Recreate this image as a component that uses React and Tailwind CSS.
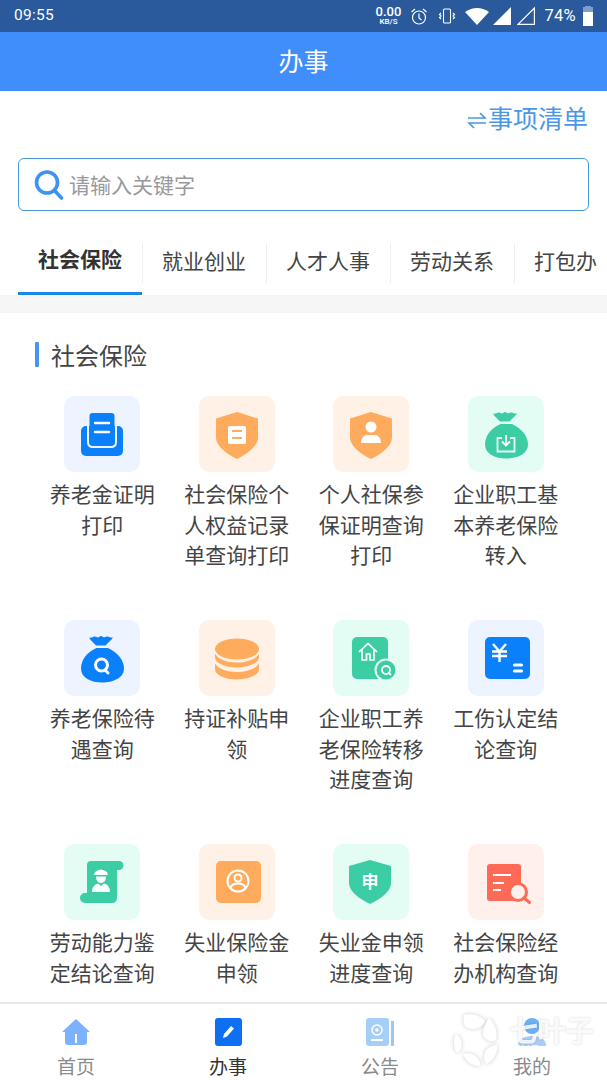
import React from "react";

const FONT = "font-['Roboto','Noto_Sans_CJK_SC',sans-serif]";
const B = "#0a80fb", O = "#ffab5e", G = "#3dcda5", R = "#ff6a56";
const BG = { b: "bg-[#edf4ff]", o: "bg-[#fff1e5]", g: "bg-[#e3fdf5]", r: "bg-[#fff0ec]" };

const Crown = ({ c }) => (
  <path fill={c} d="M25 17.500c3 1 4-1.500 6-1 2 .3 2.500 1.500 3.700.7 1.500-1.200 2.700-1.500 4-.5 1.500 1.300 2.300.3 4-.2 2-.5 3 1.500 6.300 1-1.500 2.800-5.300 5.500-7.500 8h-9.500c-2.500-2.700-5.500-5-7-8z" />
);
const Bag = ({ c }) => (
  <path fill={c} d="M32.500 28C23 32 17 40 17 48.500c0 9.500 10 14 21 14s22-4.500 22-14C60 40 53 32 44 28z" />
);
const Shield = ({ c }) => (
  <path fill={c} d="M38 16l21 6.500v19c0 8.500-10.500 16.500-21 21.500-10.500-5-21-13-21-21.500v-19z" />
);

const icons = {
  tray: (
    <>
      <rect x="17" y="30" width="42" height="30" rx="5" fill={B} />
      <path d="M24 30v16q0 5 5 5h18q5 0 5-5V30" fill="none" stroke="#edf4ff" strokeWidth="2" />
      <rect x="25.500" y="17" width="25" height="32" rx="3" fill={B} />
      <path d="M31 27h14M31 36h14" stroke="#fff" strokeWidth="2.500" strokeLinecap="round" />
    </>
  ),
  shieldDoc: (
    <>
      <Shield c={O} />
      <rect x="29" y="30" width="18" height="18" rx="2" fill="#fff" />
      <path d="M33 35h10M33 42h10" stroke={O} strokeWidth="2" />
    </>
  ),
  shieldUser: (
    <>
      <Shield c={O} />
      <circle cx="38" cy="31" r="5.500" fill="#fff" />
      <path d="M28 47c0-5 3-8 6-8h8c3 0 6 3 6 8z" fill="#fff" />
    </>
  ),
  bagIn: (
    <>
      <Crown c={G} />
      <Bag c={G} />
      <path d="M34 42h-4.500v13.500h17V42H42" fill="none" stroke="#e8fbf5" strokeWidth="1.800" />
      <path d="M38 39v10M34 45.500l4 4 4-4" fill="none" stroke="#fff" strokeWidth="1.800" />
    </>
  ),
  bagQ: (
    <>
      <Crown c={B} />
      <Bag c={B} />
      <circle cx="37.500" cy="45" r="6" fill="none" stroke="#fff" strokeWidth="3" />
      <path d="M41 50l3 3" stroke="#fff" strokeWidth="3" strokeLinecap="round" />
    </>
  ),
  coins: (
    <>
      <ellipse cx="38" cy="29" rx="22" ry="10.500" fill={O} />
      <path d="M16 34v3c0 6 10 10.500 22 10.500S60 43 60 37v-3c-3 5-12 8.500-22 8.500S19 39 16 34z" fill={O} />
      <path d="M16 43.500V49c0 6 10 10.500 22 10.500S60 55 60 49v-5.500c-3 5-12 8.500-22 8.500s-19-3.500-22-8.500z" fill={O} />
    </>
  ),
  house: (
    <>
      <rect x="19" y="17" width="36" height="42" rx="5" fill={G} />
      <path d="M26 32l9-8.500 9 8.500M29 29.500V40h4.500v-6h3.500v6h4V29.500" fill="none" stroke="#fff" strokeWidth="1.700" />
      <circle cx="53" cy="50" r="10.500" fill={G} stroke="#e3fdf5" strokeWidth="2" />
      <circle cx="53" cy="50" r="4" fill="none" stroke="#fff" strokeWidth="1.800" />
      <path d="M56 53l2 2" stroke="#fff" strokeWidth="1.800" />
    </>
  ),
  yen: (
    <>
      <rect x="17" y="17" width="45" height="42" rx="5" fill={B} />
      <path d="M25 24l6.500 7.500L38 24M24 31.500h15M24 36h15M31.500 31.500V42" fill="none" stroke="#fff" strokeWidth="2.400" />
      <path d="M46.500 45h7M46.500 51h7" stroke="#fff" strokeWidth="3.200" strokeLinecap="round" />
    </>
  ),
  scroll: (
    <>
      <path d="M27 17h28a4 4 0 0 1 0 9h-2v27q0 6-5 6H21a5 5 0 0 1 0-10h2V21q0-4 4-4z" fill={G} />
      <path d="M31 28q6-5 12 0l1 3H30zM32 32.500h10q0 6.500-5 6.500t-5-6.500z" fill="#fff" />
      <path d="M28 48q0-7 6-8.500l3 2.500 3-2.500q6 1.500 6 8.500z" fill="#fff" />
    </>
  ),
  card: (
    <>
      <rect x="17" y="17" width="45" height="42" rx="5" fill={O} />
      <circle cx="39" cy="37" r="10.500" fill="none" stroke="#fff" strokeWidth="2" />
      <circle cx="39" cy="34" r="3.500" fill="none" stroke="#fff" strokeWidth="2" />
      <path d="M31.500 44c1-3.500 4-4.500 7.500-4.500s6.500 1 7.500 4.500" fill="none" stroke="#fff" strokeWidth="2" />
    </>
  ),
  shieldShen: (
    <>
      <path d="M37 16l21 6v17c0 8.500-10.500 16-21 21-10.500-5-21-12.500-21-21V22z" fill={G} />
      <text x="37" y="44" textAnchor="middle" fontSize="17" fontWeight="700" fill="#fff" fontFamily="'Noto Sans CJK SC',sans-serif">申</text>
    </>
  ),
  listQ: (
    <>
      <rect x="19" y="20" width="34" height="37" rx="3" fill={R} />
      <path d="M25 31h18M25 39h11M25 46h8" stroke="#fff" strokeWidth="2" />
      <circle cx="50" cy="48" r="8.500" fill="#fff0ec" stroke={R} strokeWidth="3" />
      <path d="M56 54l5.500 4.500" stroke={R} strokeWidth="3" strokeLinecap="round" />
    </>
  ),
};

const items = [
  ["tray", "b", "养老金证明打印"],
  ["shieldDoc", "o", "社会保险个人权益记录单查询打印"],
  ["shieldUser", "o", "个人社保参保证明查询打印"],
  ["bagIn", "g", "企业职工基本养老保险转入"],
  ["bagQ", "b", "养老保险待遇查询"],
  ["coins", "o", "持证补贴申领"],
  ["house", "g", "企业职工养老保险转移进度查询"],
  ["yen", "b", "工伤认定结论查询"],
  ["scroll", "g", "劳动能力鉴定结论查询"],
  ["card", "o", "失业保险金申领"],
  ["shieldShen", "g", "失业金申领进度查询"],
  ["listQ", "r", "社会保险经办机构查询"],
];

const tabs = ["社会保险", "就业创业", "人才人事", "劳动关系", "打包办"];

function StatusIcons() {
  return (
    <div className="flex items-center">
      <div className="flex flex-col items-center text-white w-[24px] mr-[10px] mt-[-1px]">
        <span className="text-[13px] leading-[12px] font-medium">0.00</span>
        <span className="text-[8px] leading-[8px] font-medium">KB/S</span>
      </div>
      <svg width="18" height="19" viewBox="0 0 18 19" fill="none" stroke="#fff" strokeWidth="1.200" className="mr-[10px]">
        <circle cx="9" cy="10.500" r="6.500" />
        <path d="M9 6.500v4.500l2.500 2M1.500 5L5 2M16.500 5L13 2" />
      </svg>
      <svg width="18" height="18" viewBox="0 0 18 18" fill="none" stroke="#fff" strokeWidth="1.100" className="mr-[9px]">
        <rect x="5.500" y="2" width="7" height="14" rx="1" />
        <path d="M3 6L1.500 7.500 3 9 1.500 10.500 3 12M15 6l1.500 1.500L15 9l1.500 1.500L15 12" />
      </svg>
      <svg width="24" height="18" viewBox="0 0 24 18" className="mr-[4px]">
        <path d="M0 5Q12-3 24 5L12 18z" fill="#fff" />
      </svg>
      <svg width="18" height="18" viewBox="0 0 18 18" className="mr-[6px]">
        <path d="M0 18L18 0v18z" fill="#fff" />
      </svg>
      <svg width="18" height="18" viewBox="0 0 18 18" fill="none" stroke="#fff" strokeWidth="1.200" className="mr-[9px]">
        <path d="M1 17.400L17.400 1v16.400z" />
      </svg>
      <span className="text-[16.500px] text-white tracking-[0.3px] mr-[7px]">74%</span>
      <div className="relative w-[10px] h-[19px] bg-white">
        <div className="absolute top-[-1px] left-[2px] w-[6px] h-[6px] bg-[#7d9dc9]" />
        <div className="absolute top-0 left-0 w-full h-[5px] bg-[#7d9dc9]" />
      </div>
    </div>
  );
}

function Item({ icon, tone, label }) {
  return (
    <div className="h-[224px] flex flex-col items-center px-3">
      <div className={`w-[76px] h-[76px] rounded-[10px] ${BG[tone]} shrink-0`}>
        <svg width="76" height="76" viewBox="0 0 76 76">{icons[icon]}</svg>
      </div>
      <div className="mt-[8px] text-[21px] leading-[30.500px] text-center text-[#444] w-full">{label}</div>
    </div>
  );
}

function Nav({ label, active, children }) {
  return (
    <div className="flex flex-col items-center">
      <div className="h-[28px] mt-[14px] flex items-center justify-center">{children}</div>
      <span className={`mt-[8px] text-[19px] leading-[28px] ${active ? "text-[#333]" : "text-[#8a8a8a]"}`}>{label}</span>
    </div>
  );
}

export default function App() {
  return (
    <div className={`relative w-[607px] h-[1080px] overflow-hidden bg-white flex flex-col ${FONT}`}>
      <div className="h-[32px] shrink-0 bg-[#2a5a9c] flex items-center justify-between pl-[14px] pr-[14px]">
        <span className="text-[15.500px] text-white tracking-[0.3px]">09:55</span>
        <StatusIcons />
      </div>
      <div className="h-[59px] shrink-0 bg-[#3f8efc] flex items-center justify-center text-white text-[25px] pt-[3px]">办事</div>

      <div className="flex-1 min-h-0 overflow-hidden">
        <div className="flex justify-end items-center h-[56px] pr-[19px] text-[#4a96e8] text-[25px] leading-none">
          <svg width="20" height="20" viewBox="0 0 20 20" fill="none" stroke="currentColor" strokeWidth="1.600" className="mr-[1px] mt-[2px]">
            <path d="M1 8h17L13 3M19 13H2l5 5" />
          </svg>
          <span>事项清单</span>
        </div>
        <div className="mx-[18px] mt-[11px] h-[53px] rounded-[6px] border-[1.500px] border-[#4b9ad8] flex items-center pl-[15px]">
          <svg width="30" height="32" viewBox="0 0 30 32" fill="none" stroke="#3f92f2" strokeWidth="3.600" className="mr-[5px]">
            <circle cx="13" cy="13.500" r="10.500" />
            <path d="M21 22l6.500 7" strokeLinecap="round" />
          </svg>
          <span className="text-[#999] text-[21px] pt-[4px]">请输入关键字</span>
        </div>
        <div className="mt-[21px] flex pl-[18px] overflow-hidden h-[66px] whitespace-nowrap">
          {tabs.map((t, i) => (
            <div
              key={t}
              className={`relative shrink-0 w-[124px] h-[63px] flex items-center justify-center text-[21px] pb-[2px] ${
                i === 0 ? "font-bold text-[#333] border-b-[3px] border-[#1a86e8]" : "text-[#444]"
              }`}
            >
              <span className={i === 4 ? "absolute left-[20px]" : ""}>{t}</span>
              {i < 4 && <span className="absolute right-[-1px] top-[11px] h-[40px] w-px bg-[#eeeeee]" />}
            </div>
          ))}
        </div>
        <div className="h-[18px] bg-[#f6f6f6] -mt-[3px]" />
        <div className="flex items-center mt-[29px] pl-[35px] h-[25px]">
          <span className="w-[4px] h-[25px] rounded-[1px] bg-[#4a93f0] mr-[12px]" />
          <span className="text-[24px] text-[#444] pt-[4px]">社会保险</span>
        </div>
        <div className="mt-[29px] pl-[35px] pr-[34px] grid grid-cols-4">
          {items.map(([ic, tone, label]) => (
            <Item key={label} icon={ic} tone={tone} label={label} />
          ))}
        </div>
      </div>

      <div className="relative h-[78px] shrink-0 bg-white border-t-2 border-[#e8e8e8] grid grid-cols-4 w-[608px]">
        <Nav label="首页">
          <svg width="28" height="26" viewBox="0 0 28 26">
            <path d="M14 0L28 13h-3v10q0 3-3 3H6q-3 0-3-3V13H0z" fill="#7cb2fd" />
            <path d="M14 15v9" stroke="#fff" strokeWidth="2" />
          </svg>
        </Nav>
        <Nav label="办事" active>
          <svg width="27" height="28" viewBox="0 0 27 28">
            <rect width="27" height="28" rx="3" fill="#0f6ff2" />
            <path d="M8 20l1-4 7-8 3 2.500-7 8z" fill="#fff" />
          </svg>
        </Nav>
        <Nav label="公告">
          <svg width="28" height="28" viewBox="0 0 28 28">
            <path d="M25 3h3v24q0 1-1 1h-2z" fill="#9cc6f6" />
            <rect width="23" height="28" rx="3" fill="#a6cff8" />
            <circle cx="11" cy="12" r="5" fill="none" stroke="#fff" strokeWidth="1.500" />
            <circle cx="11" cy="12" r="1.800" fill="#fff" />
            <path d="M5 22h12" stroke="#fff" strokeWidth="2" />
          </svg>
        </Nav>
        <Nav label="我的">
          <svg width="28" height="28" viewBox="0 0 28 28">
            <circle cx="14" cy="8" r="8" fill="#6fb0f5" />
            <path d="M0 28q0-10 14-10t14 10z" fill="#a9cdf5" />
          </svg>
        </Nav>
      </div>

      <div className="absolute left-[452px] top-[1012px] w-[150px] h-[46px] pointer-events-none">
        <svg width="50" height="56" viewBox="0 0 50 56" className="absolute left-0 top-0 drop-shadow-[0_0_2px_rgba(0,0,0,0.2)]">
          <path d="M12 3c8-2 16 0 21 6-3 8-13 10-19 6-3-3-3-8-2-12z" fill="#fff" />
          <path d="M37 6c6 6 9 14 7 22-5 3-11 0-13-5 0-6 2-12 6-17z" fill="#fff" />
          <path d="M45 33c1 8-3 15-10 19-4-3-4-9-1-14 3-3 7-5 11-5z" fill="#fff" />
          <path d="M4 22c-3 6-3 13 1 19 4-2 6-8 4-13-1-3-3-5-5-6z" fill="#fff" />
          <path d="M11 42c3 8 9 12 17 12 1-5-3-10-8-12-3-1-6-1-9 0z" fill="#fff" />
        </svg>
        <span className="absolute left-[57px] top-[3px] text-[29px] leading-[34px] font-bold text-white/85 tracking-[-1px] whitespace-nowrap drop-shadow-[0_0_1px_rgba(0,0,0,0.2)]">七叶子</span>
        <span className="absolute left-[61px] top-[30px] text-[13px] leading-[16px] text-white/75 tracking-[1.500px] whitespace-nowrap">7YZ.COM</span>
      </div>
    </div>
  );
}
